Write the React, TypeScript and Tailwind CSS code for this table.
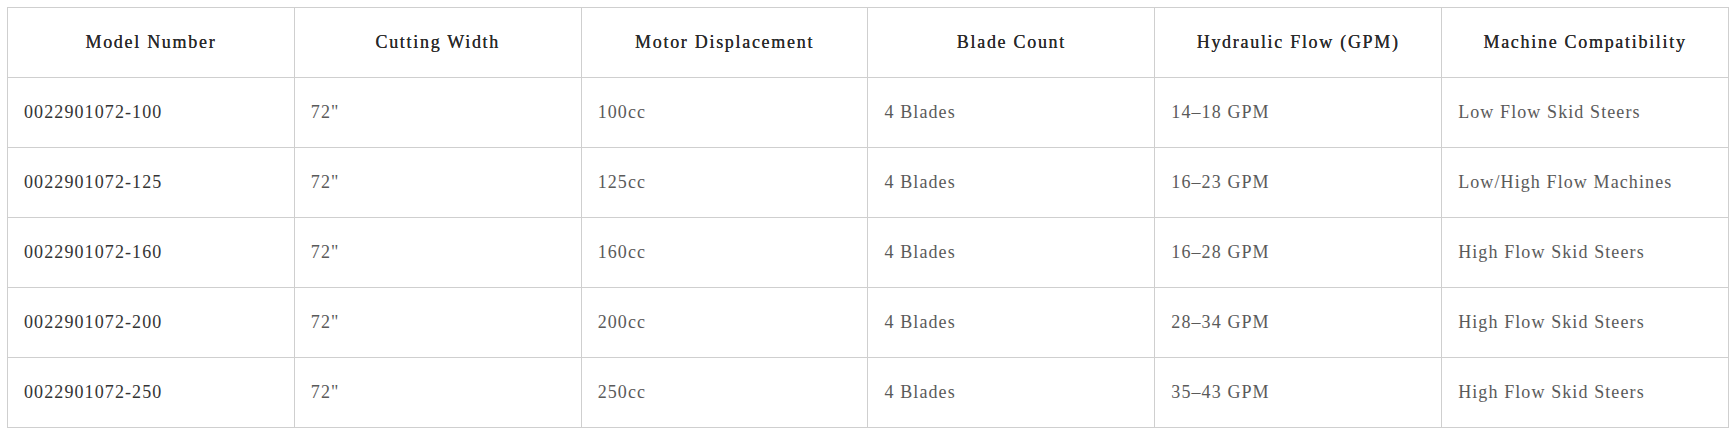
const headers = [
  'Model Number',
  'Cutting Width',
  'Motor Displacement',
  'Blade Count',
  'Hydraulic Flow (GPM)',
  'Machine Compatibility',
]

const rows = [
  ['0022901072-100', '72"', '100cc', '4 Blades', '14–18 GPM', 'Low Flow Skid Steers'],
  ['0022901072-125', '72"', '125cc', '4 Blades', '16–23 GPM', 'Low/High Flow Machines'],
  ['0022901072-160', '72"', '160cc', '4 Blades', '16–28 GPM', 'High Flow Skid Steers'],
  ['0022901072-200', '72"', '200cc', '4 Blades', '28–34 GPM', 'High Flow Skid Steers'],
  ['0022901072-250', '72"', '250cc', '4 Blades', '35–43 GPM', 'High Flow Skid Steers'],
]

export default function App() {
  return (
    <div className="bg-white p-[7px] [font-family:'Liberation_Serif','Times_New_Roman',serif]">
      <table className="w-full table-fixed border-collapse border border-[#cfcfcf] [font-family:'Liberation_Serif','Times_New_Roman',serif]">
        <thead>
          <tr className="h-[70px]">
            {headers.map((h) => (
              <th
                key={h}
                className="border border-[#cfcfcf] px-4 pb-[1px] text-center text-[18px] font-normal tracking-[1.7px] text-[#2a2a2a] [text-shadow:0_0_0.5px_#2a2a2a]"
              >
                {h}
              </th>
            ))}
          </tr>
        </thead>
        <tbody>
          {rows.map((row) => (
            <tr key={row[0]} className="h-[70px]">
              {row.map((cell, i) => (
                <td
                  key={i}
                  className={
                    i === 0
                      ? 'border border-[#cfcfcf] px-4 pb-[1px] text-left text-[18px] tracking-[1.1px] text-[#333]'
                      : 'border border-[#cfcfcf] px-4 pb-[1px] text-left text-[18px] tracking-[1.1px] text-[#5a5a5a]'
                  }
                >
                  {cell}
                </td>
              ))}
            </tr>
          ))}
        </tbody>
      </table>
    </div>
  )
}
